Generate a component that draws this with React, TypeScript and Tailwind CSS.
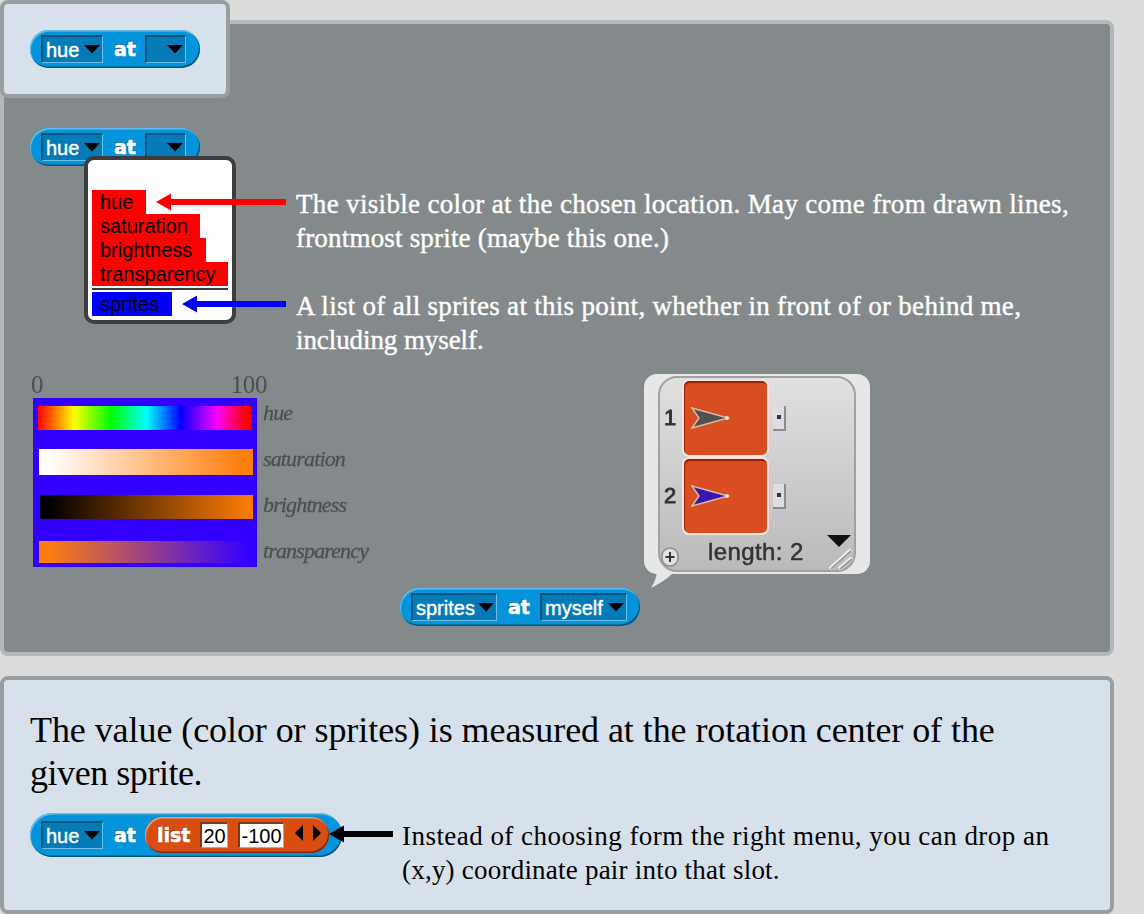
import React from "react";

const serif = "font-['Liberation_Serif',serif]";
const sans = "font-['Liberation_Sans',sans-serif]";

function Caret() {
  return (
    <svg className="shrink-0" width="16" height="9" viewBox="0 0 16 9">
      <path d="M0 0H16L8 8.5Z" fill="#000" />
    </svg>
  );
}

function Slot({ label, size }: { label?: string; size: string }) {
  return (
    <div
      className={`${sans} ${size} flex h-[28px] items-center justify-end border-t-2 border-l-2 border-r border-b border-t-[#04547d] border-l-[#04547d] border-r-[#6cc0ea] border-b-[#6cc0ea] bg-[#047ab6] pr-[2px] text-[20px] leading-[28px] text-white`}
    >
      {label && (
        <span className="mr-auto ml-[3px] whitespace-nowrap [-webkit-text-stroke:0.4px_white]">{label}</span>
      )}
      <Caret />
    </div>
  );
}

function Word({ children, className = "" }: { children: React.ReactNode; className?: string }) {
  return (
    <span
      className={`font-['DejaVu_Sans',sans-serif] text-[19px] leading-[28px] font-bold text-white [-webkit-text-stroke:0.6px_white] ${className}`}
    >
      {children}
    </span>
  );
}

function Block({ size, children }: { size: string; children: React.ReactNode }) {
  return (
    <div
      className={`${size} flex items-center rounded-full bg-[#0494dc] pl-[11px] shadow-[inset_1px_1.5px_0.5px_#63bdec,inset_-1px_-1.5px_0.5px_#04557f]`}
    >
      {children}
    </div>
  );
}

const atShadow = "[text-shadow:-1px_-1px_0_#04557f]";

function HueAt() {
  return (
    <Block size="h-[38px] w-[170px]">
      <Slot label="hue" size="w-[62px]" />
      <Word className={`ml-[11px] w-[31px] ${atShadow}`}>at</Word>
      <Slot size="w-[41px]" />
    </Block>
  );
}

function Arrow({ color, width, className = "" }: { color: string; width: number; className?: string }) {
  return (
    <svg className={className} width={width} height="18" viewBox={`0 0 ${width} 18`}>
      <path d={`M0 9L15 0.5V6H${width}V12H15V17.5Z`} fill={color} />
    </svg>
  );
}

function Menu() {
  return (
    <div
      className={`${sans} absolute top-[28px] left-[54px] h-[168px] w-[152px] rounded-[10px] border-4 border-[#3d3d3d] bg-white px-[4px] pt-[30px] text-[20px] leading-[24px] text-black`}
    >
      <div className="h-[24px] w-[54px] bg-[#f00] pl-[8px]">hue</div>
      <div className="h-[24px] w-[108px] bg-[#f00] pl-[8px]">saturation</div>
      <div className="h-[24px] w-[114px] bg-[#f00] pl-[8px]">brightness</div>
      <div className="h-[24px] w-[136px] bg-[#f00] pl-[8px]">transparency</div>
      <div className="my-[2px] h-[2px] w-[136px] bg-[#3d3d3d]" />
      <div className="h-[24px] w-[80px] bg-[#00f] pl-[8px]">sprites</div>
    </div>
  );
}

function Chart() {
  return (
    <div className={`${serif} ml-[27px] w-[350px] text-[#4b4f51] blur-[0.5px]`}>
      <div className="flex h-[26px] w-[236px] justify-between text-[25px] leading-[26px] tracking-[-0.4px]">
        <span>0</span>
        <span>100</span>
      </div>
      <div className="flex">
        <div className="ml-[2px] h-[169px] w-[224px] bg-[#3300ff]">
          <div className="mt-[8px] ml-[5px] h-[24px] w-[213px] bg-[linear-gradient(to_right,#f00,#ff0_17%,#0f0_34%,#0ff_51%,#00f_67%,#f0f_84%,#f00_98%)]" />
          <div className="mt-[19px] ml-[6px] h-[26px] w-[214px] bg-[linear-gradient(to_right,#fff_4%,#ff7f0e_95%)]" />
          <div className="mt-[20px] ml-[7px] h-[24px] w-[213px] bg-[linear-gradient(to_right,#000_4%,#fb7b05_98%)]" />
          <div className="mt-[22px] ml-[6px] h-[22px] w-[213px] bg-[linear-gradient(to_right,#ff7f0e_4%,#3300ff_98%)]" />
        </div>
        <div className="ml-[6px] flex flex-col text-[22px] leading-[46px] tracking-[-0.85px] italic [-webkit-text-stroke:0.3px_#4b4f51]">
          <span className="-mt-[8px]">hue</span>
          <span>saturation</span>
          <span>brightness</span>
          <span>transparency</span>
        </div>
      </div>
    </div>
  );
}

function Row({ index, fill }: { index: number; fill: string }) {
  return (
    <div className="flex h-[78px] items-center">
      <span className="-mt-[2px] w-[20px] text-center text-[22px] [-webkit-text-stroke:0.9px_#333]">{index}</span>
      <div className="ml-[2px] flex h-[78px] w-[87px] items-center rounded-[7px] border-2 border-[#f4e4dc] bg-[#d84e20] pl-[7px] shadow-[inset_1px_2px_1px_#96200c]">
        <svg width="40" height="22" viewBox="0 0 40 22">
          <path d="M1 1L37 11L1 21L8 11Z" fill={fill} stroke="#d9b9a8" strokeWidth="1.5" />
          <circle cx="36" cy="11" r="2" fill="#f5e5dd" />
        </svg>
      </div>
      <div className="ml-[4px] flex h-[25px] w-[13px] items-center justify-center border-r-2 border-b-2 border-[#8b8b8b] bg-[#dedede]">
        <div className="h-[4px] w-[4px] bg-[#333]" />
      </div>
    </div>
  );
}

function Watcher() {
  return (
    <div className="relative h-[200px] w-[226px] rounded-[13px] bg-[#e7e7e7] pt-[2px] pl-[14px]">
      <svg className="absolute top-[198px] left-[7px]" width="24" height="16" viewBox="0 0 24 16">
        <path d="M6 0Q5 8 0 16Q14 9 22 1V0Z" fill="#e7e7e7" />
      </svg>
      <div
        className={`${sans} h-[196px] w-[198px] rounded-[19px] border-2 border-[#a1a1a1] bg-[linear-gradient(#e0e0e0,#bababa)] pt-[1px] text-[#333] blur-[0.5px]`}
      >
        <Row index={1} fill="#50504c" />
        <Row index={2} fill="#3916ae" />
        <div className="flex h-[35px]">
          <svg className="mt-[11px] ml-[1px]" width="18" height="22" viewBox="0 0 18 22">
            <rect x="1" y="2" width="16" height="18" rx="8" fill="#e2e2e2" stroke="#8c8c8c" strokeWidth="1.5" />
            <path d="M9 6V16M4.5 11H13.5" stroke="#333" strokeWidth="2" />
          </svg>
          <span className="ml-[29px] w-[98px] text-[24px] leading-[33px] tracking-[0.4px] whitespace-nowrap [-webkit-text-stroke:0.5px_#333]">length: 2</span>
          <svg className="ml-[19px]" width="29" height="36" viewBox="0 0 29 36">
            <path d="M2 0H26L14 12Z" fill="#111" />
            <path d="M5 34L26 15M14 34L27 23" stroke="#f2f2f2" strokeWidth="4" />
            <path d="M6 34L26 16M15 34L27 24" stroke="#969696" strokeWidth="1.8" />
          </svg>
        </div>
      </div>
    </div>
  );
}

function Operand({ value, size }: { value: string; size: string }) {
  return (
    <span
      className={`${sans} ${size} h-[26px] border-t-2 border-l-2 border-r border-b border-t-[#7f3719] border-l-[#7f3719] border-r-[#e99a75] border-b-[#e99a75] bg-white text-center text-[20px] leading-[25px] text-black`}
    >
      {value}
    </span>
  );
}

export default function App() {
  return (
    <div className="relative h-[914px] w-[1144px] overflow-hidden bg-[#dcdcdc] pt-[20px]">
      <div className="absolute top-0 left-0 z-10 h-[98px] w-[230px] rounded-[8px] border-4 border-[#999ea0] bg-[#d7e1eb] pt-[26px] pl-[26px]">
        <HueAt />
      </div>

      <section className="h-[636px] w-[1114px] rounded-[8px] border-4 border-[#b2b8bb] bg-[#848a8c] pt-[104px]">
        <div className="flex h-[242px]">
          <div className="relative ml-[26px] h-[38px] w-[266px]">
            <HueAt />
            <Menu />
            <Arrow color="#ff0000" width={130} className="absolute top-[65px] left-[126px]" />
            <Arrow color="#0000ff" width={104} className="absolute top-[167px] left-[152px]" />
          </div>
          <div
            className={`${serif} flex flex-col gap-[34px] pt-[59px] text-[27px] leading-[34px] whitespace-nowrap text-white [-webkit-text-stroke:0.4px_white]`}
          >
            <p>
              <span className="tracking-[0.33px]">The visible color at the chosen location. May come from drawn lines,</span>
              <br />
              <span className="tracking-[0.19px]">frontmost sprite (maybe this one.)</span>
            </p>
            <p>
              <span className="tracking-[0.29px]">A list of all sprites at this point, whether in front of or behind me,</span>
              <br />
              <span className="tracking-[-0.08px]">including myself.</span>
            </p>
          </div>
        </div>
        <div className="flex h-[218px] pt-[2px]">
          <Chart />
          <div className="ml-[263px] pt-[2px]">
            <Watcher />
          </div>
        </div>
        <div className="ml-[396px]">
          <Block size="h-[38px] w-[240px]">
            <Slot label="sprites" size="w-[86px]" />
            <Word className={`ml-[11px] w-[32px] ${atShadow}`}>at</Word>
            <Slot label="myself" size="w-[87px]" />
          </Block>
        </div>
      </section>

      <section className="mt-[20px] h-[238px] w-[1114px] rounded-[8px] border-4 border-[#999ea0] bg-[#d7e1eb] pt-[29px] pl-[26px]">
        <p className={`${serif} text-[36px] leading-[43px] whitespace-nowrap text-black`}>
          <span className="tracking-[-0.07px]">The value (color or sprites) is measured at the rotation center of the</span>
          <br />
          <span className="tracking-[-0.45px]">given sprite.</span>
        </p>
        <div className="mt-[18px] flex">
          <Block size="h-[44px] w-[312px]">
            <Slot label="hue" size="w-[62px]" />
            <Word className={`ml-[11px] w-[31px] ${atShadow}`}>at</Word>
            <div className="flex h-[36px] w-[184px] items-center rounded-full bg-[#d94d11] pl-[12px] shadow-[inset_1px_1.5px_0.5px_#ef9a78,inset_-1px_-1.5px_0.5px_#7d2c0a]">
              <Word className="w-[43px] [text-shadow:-1px_-1px_0_#7d2c0a]">list</Word>
              <Operand value="20" size="w-[28px]" />
              <Operand value="-100" size="ml-[10px] w-[46px]" />
              <svg className="-mt-[4px] ml-[11px]" width="26" height="16" viewBox="0 0 26 16">
                <path d="M8 0V16L0 8ZM18 0V16L26 8Z" fill="#000" />
              </svg>
            </div>
          </Block>
          <Arrow color="#000000" width={64} className="relative z-10 mt-[12px] -ml-[13px]" />
          <p className={`${serif} ml-[9px] pt-[6px] text-[27px] leading-[34px] whitespace-nowrap text-black`}>
            <span className="tracking-[0.46px]">Instead of choosing form the right menu, you can drop an</span>
            <br />
            <span className="tracking-[0.22px]">(x,y) coordinate pair into that slot.</span>
          </p>
        </div>
      </section>
    </div>
  );
}
